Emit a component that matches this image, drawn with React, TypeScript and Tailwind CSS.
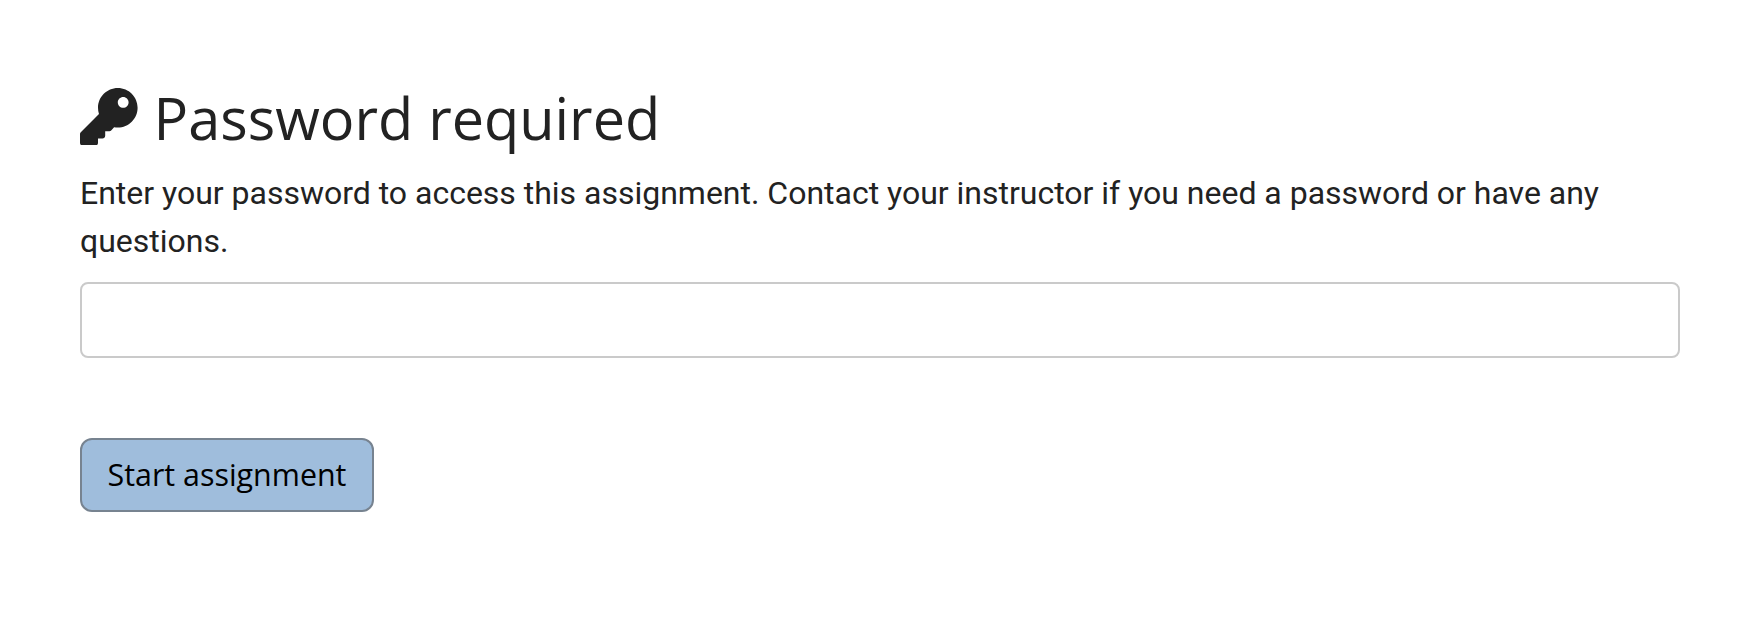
import React from 'react';
import { FaKey } from 'react-icons/fa';

export default function App() {
  return (
    <main className="min-h-screen bg-white pl-20 pr-[70px] pt-[76px] text-[#222222]">
      <h1 className="flex h-[84px] items-center font-['Open_Sans',sans-serif] text-[57.6px] leading-[84px]">
        <FaKey className="mb-[3px] mr-[16px] size-[57.6px]" />
        Password required
      </h1>
      <label htmlFor="password" className="mt-[9px] block font-['Roboto',sans-serif] text-[32px] leading-[48px] tracking-[-0.01px]">
        Enter your password to access this assignment. Contact your instructor if you need a password or have any questions.
      </label>
      <input id="password" type="password" className="mt-[17px] block h-[76px] w-full rounded-lg border-2 border-[#cacaca] bg-white px-6" />
      <button className="mt-20 flex h-[74px] w-[294px] items-center justify-center rounded-xl border-2 border-[#778390] bg-[#9fbddc] font-['Open_Sans',sans-serif] text-[30.4px] text-black">
        Start assignment
      </button>
    </main>
  );
}
